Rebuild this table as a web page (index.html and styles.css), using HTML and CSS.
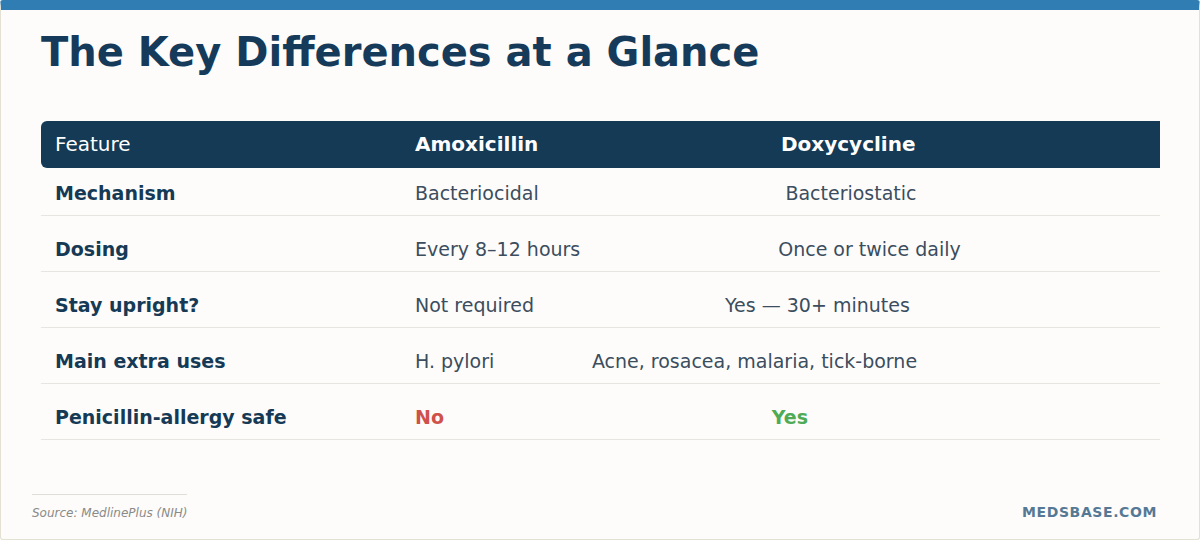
FILE: index.html
```html
<!DOCTYPE html>
<html lang="en">
<head>
<meta charset="utf-8">
<title>The Key Differences at a Glance</title>
<link rel="stylesheet" href="styles.css">
</head>
<body>
<div class="card">
  <h1 class="title">The Key Differences at a Glance</h1>
  <div class="compare">
    <div class="row head">
      <div class="cell label">Feature</div>
      <div class="cell drug">Amoxicillin</div>
      <div class="cell drug">Doxycycline</div>
    </div>
    <div class="body">
      <div class="row">
        <div class="cell label">Mechanism</div>
        <div class="cell">Bacteriocidal</div>
        <div class="cell">Bacteriostatic</div>
      </div>
      <div class="row">
        <div class="cell label">Dosing</div>
        <div class="cell">Every 8–12 hours</div>
        <div class="cell">Once or twice daily</div>
      </div>
      <div class="row">
        <div class="cell label">Stay upright?</div>
        <div class="cell">Not required</div>
        <div class="cell">Yes — 30+ minutes</div>
      </div>
      <div class="row">
        <div class="cell label">Main extra uses</div>
        <div class="cell">H. pylori</div>
        <div class="cell">Acne, rosacea, malaria, tick-borne</div>
      </div>
      <div class="row">
        <div class="cell label">Penicillin-allergy safe</div>
        <div class="cell no">No</div>
        <div class="cell yes">Yes</div>
      </div>
    </div>
  </div>
  <footer class="footer">
    <div class="source">Source: MedlinePlus (NIH)</div>
    <div class="brand">MEDSBASE.COM</div>
  </footer>
</div>
</body>
</html>
```
FILE: styles.css
```css
html, body {
  margin: 0;
  padding: 0;
  background: #ffffff;
}

body {
  font-family: "DejaVu Sans", Verdana, sans-serif;
}

.card {
  box-sizing: border-box;
  width: 1200px;
  height: 540px;
  background: #fdfcfa;
  border: 1px solid #e3e0d4;
  border-top: 10px solid #2f7db2;
  border-radius: 3px;
  padding: 0 39px 18px 40px;
  display: flex;
  flex-direction: column;
}

.title {
  margin: 18px 0 0 0;
  font-size: 40px;
  line-height: 48px;
  font-weight: bold;
  color: #163b5a;
}

.compare {
  margin-top: 45px;
}

.row {
  display: table;
  width: 100%;
  table-layout: auto;
  border-collapse: separate;
  border-spacing: 0;
}

.cell {
  display: table-cell;
  padding: 13px 14px 10px 14px;
  font-size: 19px;
  line-height: 24px;
  color: #3b4d5e;
  border-bottom: 1px solid #e7e5df;
  white-space: nowrap;
  text-align: left;
}

.cell.label {
  width: 332px;
  font-weight: bold;
  color: #163a55;
}

.head {
  background: #143a56;
  border-radius: 6px 0 0 6px;
}

.head .cell {
  padding: 11px 14px 12px 14px;
  font-size: 20px;
  border-bottom: none;
  color: #ffffff;
}

.head .cell.label {
  font-weight: normal;
  color: #ffffff;
}

.head .cell.drug {
  font-weight: bold;
}

.body {
  display: flex;
  flex-direction: column;
  gap: 8px;
}

.cell.no {
  color: #d0504a;
  font-weight: bold;
}

.cell.yes {
  color: #4fab55;
  font-weight: bold;
}

.footer {
  margin-top: auto;
  margin-left: -9px;
  margin-right: 3px;
  display: flex;
  justify-content: space-between;
  align-items: flex-end;
}

.source {
  width: 155px;
  border-top: 1px solid #e0ded8;
  padding-top: 10px;
  font-size: 12px;
  line-height: 16px;
  font-style: italic;
  color: #8a8a88;
  white-space: nowrap;
}

.brand {
  font-size: 14px;
  line-height: 18px;
  font-weight: bold;
  letter-spacing: 0.6px;
  color: #557995;
}
```
